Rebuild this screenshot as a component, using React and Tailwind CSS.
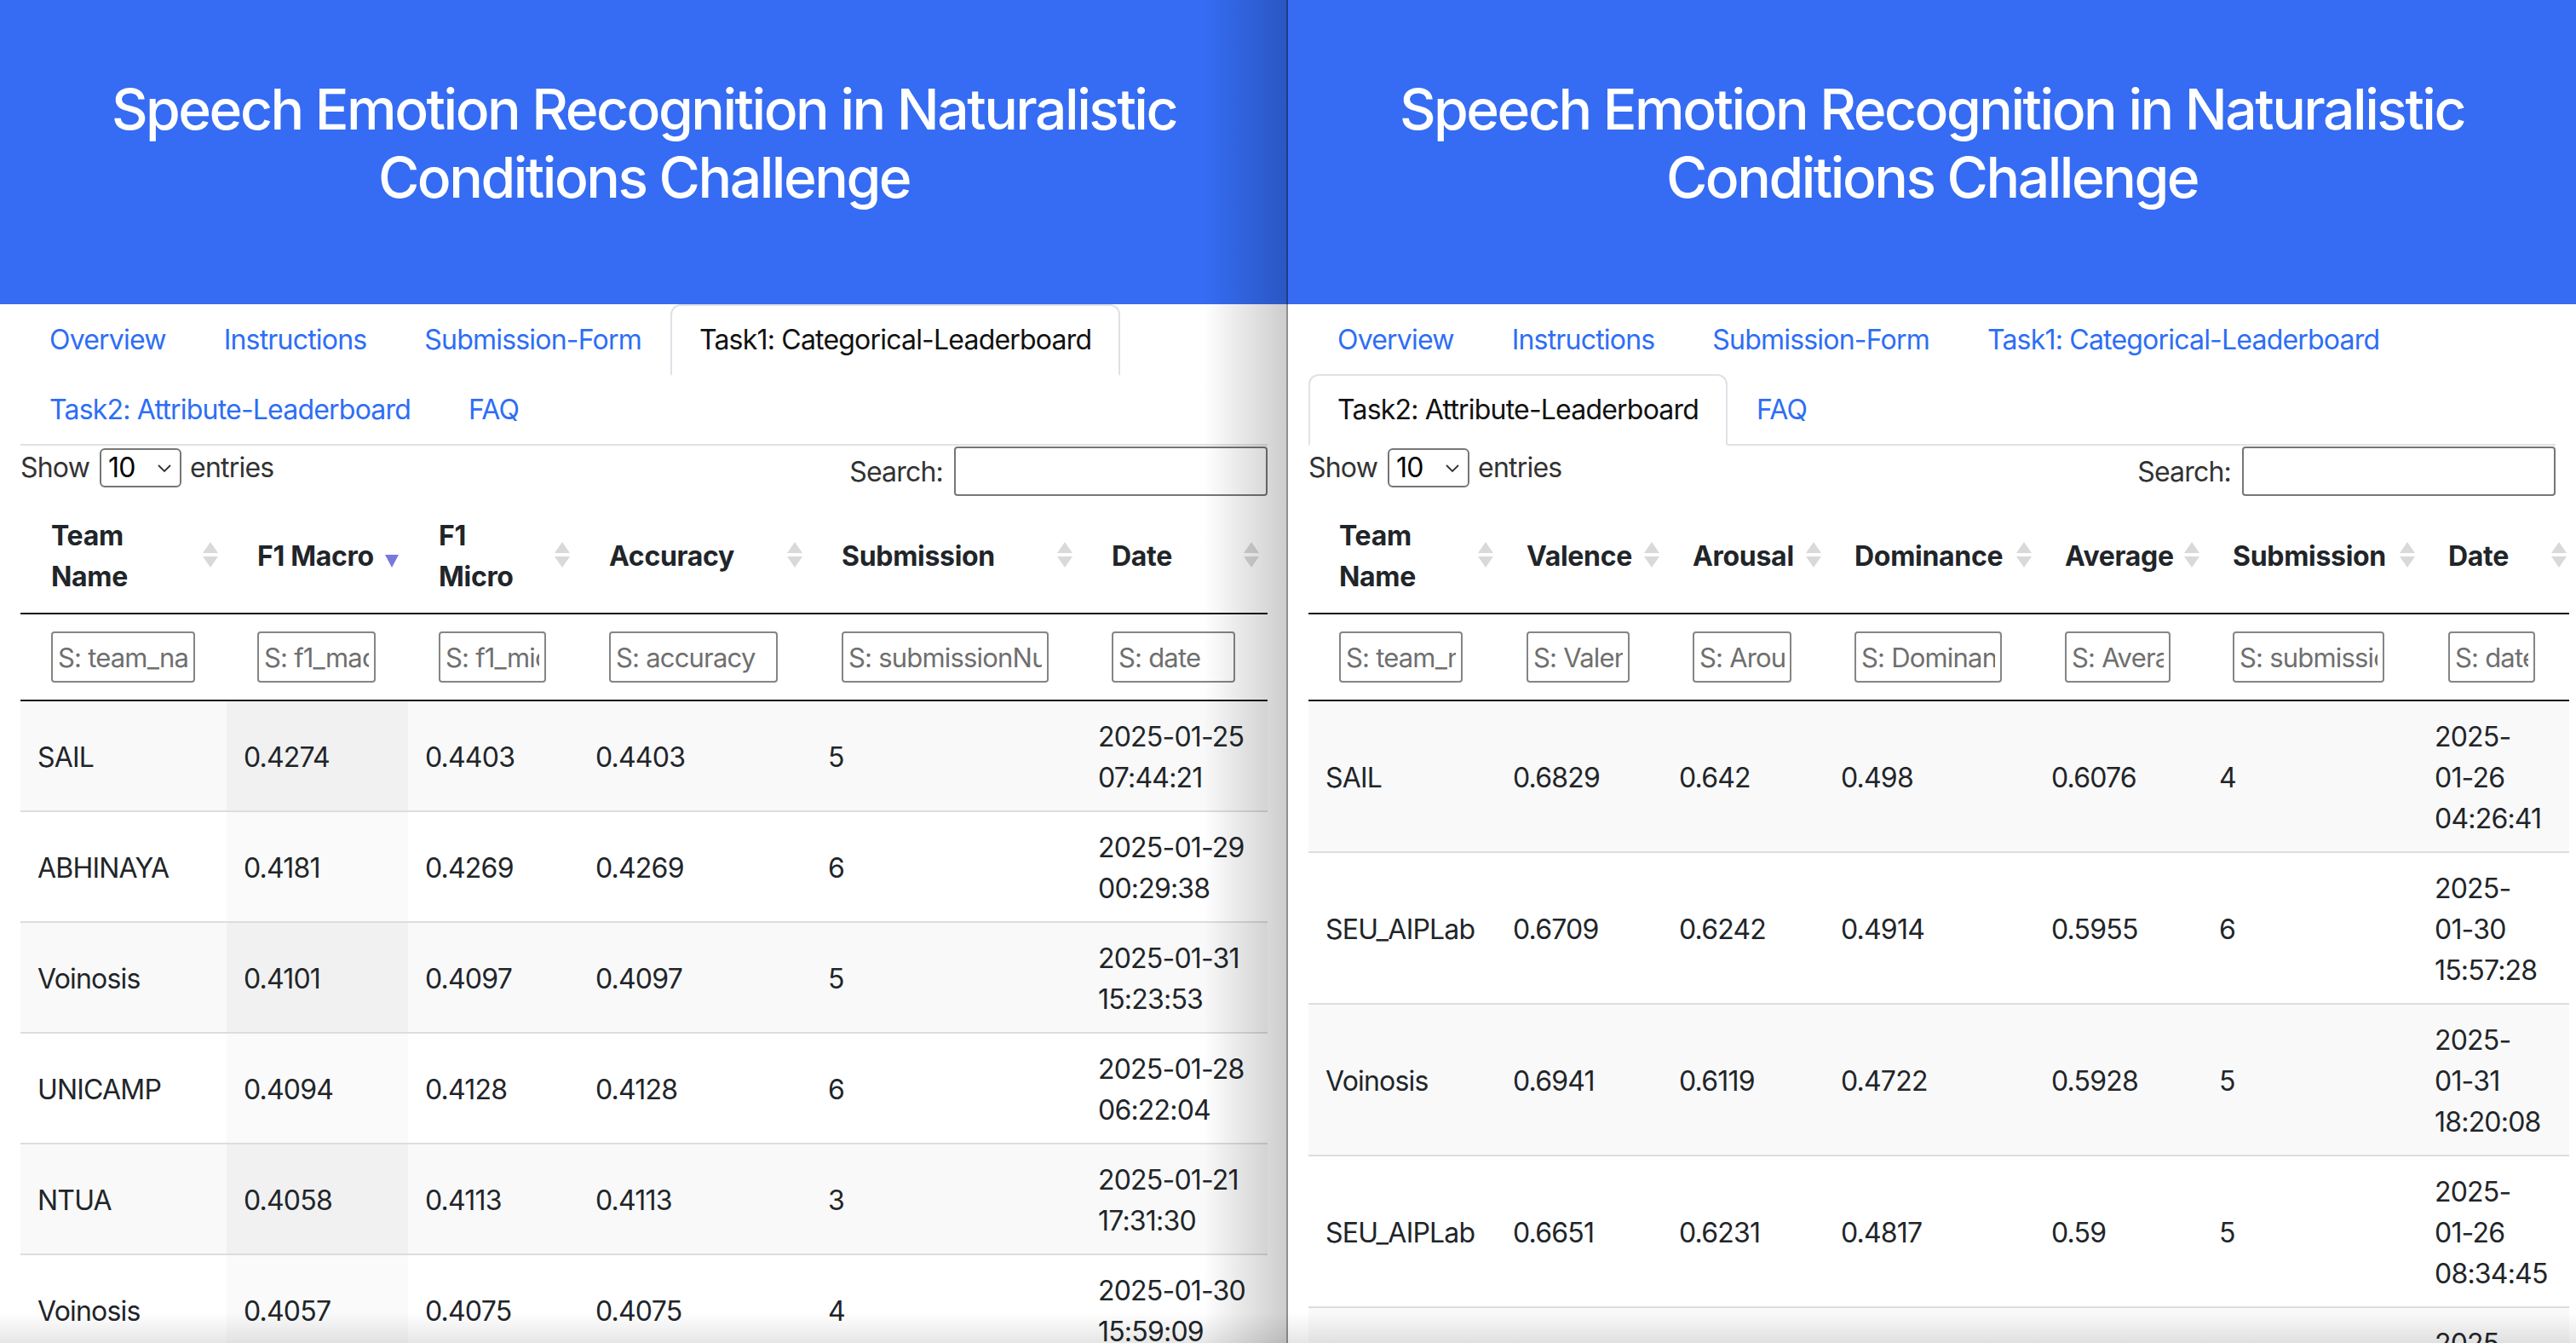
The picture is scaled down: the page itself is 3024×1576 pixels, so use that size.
import React from 'react';

const TABS = [
  'Overview',
  'Instructions',
  'Submission-Form',
  'Task1: Categorical-Leaderboard',
  'Task2: Attribute-Leaderboard',
  'FAQ',
];

const leftCols = [
  { label: ['Team', 'Name'], w: 'w-[242px]', ph: 'S: team_name', iw: 'w-[169px]' },
  { label: ['F1 Macro'], w: 'w-[213px]', ph: 'S: f1_macro', iw: 'w-[139px]' },
  { label: ['F1', 'Micro'], w: 'w-[200px]', ph: 'S: f1_micro', iw: 'w-[126px]' },
  { label: ['Accuracy'], w: 'w-[273px]', ph: 'S: accuracy', iw: 'w-[198px]' },
  { label: ['Submission'], w: 'w-[317px]', ph: 'S: submissionNum', iw: 'w-[243px]' },
  { label: ['Date'], w: 'w-[219px]', ph: 'S: date', iw: 'w-[145px]' },
];

const leftRows = [
  ['SAIL', '0.4274', '0.4403', '0.4403', '5', ['2025-01-25', '07:44:21']],
  ['ABHINAYA', '0.4181', '0.4269', '0.4269', '6', ['2025-01-29', '00:29:38']],
  ['Voinosis', '0.4101', '0.4097', '0.4097', '5', ['2025-01-31', '15:23:53']],
  ['UNICAMP', '0.4094', '0.4128', '0.4128', '6', ['2025-01-28', '06:22:04']],
  ['NTUA', '0.4058', '0.4113', '0.4113', '3', ['2025-01-21', '17:31:30']],
  ['Voinosis', '0.4057', '0.4075', '0.4075', '4', ['2025-01-30', '15:59:09']],
];

const rightCols = [
  { label: ['Team', 'Name'], w: 'w-[220px]', ph: 'S: team_name', iw: 'w-[145px]' },
  { label: ['Valence'], w: 'w-[195px]', ph: 'S: Valence', iw: 'w-[121px]' },
  { label: ['Arousal'], w: 'w-[190px]', ph: 'S: Arousal', iw: 'w-[116px]' },
  { label: ['Dominance'], w: 'w-[247px]', ph: 'S: Dominance', iw: 'w-[173px]' },
  { label: ['Average'], w: 'w-[197px]', ph: 'S: Average', iw: 'w-[124px]' },
  { label: ['Submission'], w: 'w-[253px]', ph: 'S: submissionNum', iw: 'w-[178px]' },
  { label: ['Date'], w: 'w-[178px]', ph: 'S: date', iw: 'w-[102px]' },
];

const rightRows = [
  ['SAIL', '0.6829', '0.642', '0.498', '0.6076', '4', ['2025-', '01-26', '04:26:41']],
  ['SEU_AIPLab', '0.6709', '0.6242', '0.4914', '0.5955', '6', ['2025-', '01-30', '15:57:28']],
  ['Voinosis', '0.6941', '0.6119', '0.4722', '0.5928', '5', ['2025-', '01-31', '18:20:08']],
  ['SEU_AIPLab', '0.6651', '0.6231', '0.4817', '0.59', '5', ['2025-', '01-26', '08:34:45']],
  ['NTUA', '0.6712', '0.6055', '0.4678', '0.5815', '3', ['2025-', '01-21', '17:45:02']],
];

const SortIcon = ({ active }) =>
  active ? (
    <svg width="16" height="30" viewBox="0 0 16 30" className="block">
      <polygon points="0,15 16,15 8,30" fill="#7779dc" />
    </svg>
  ) : (
    <svg width="18" height="30" viewBox="0 0 18 30" className="block">
      <polygon points="9,0 18,13 0,13" fill="#d9d9d9" />
      <polygon points="0,17 18,17 9,30" fill="#d9d9d9" />
    </svg>
  );

const Tabs = ({ active }) => (
  <ul className="flex flex-wrap border-b-2 border-[#dee2e6]">
    {TABS.map((t, i) => (
      <li
        key={t}
        className={`-mb-[2px] rounded-t-[12px] border-2 px-[32px] py-[16px] text-[32px] leading-[48px] ${
          i === active
            ? 'border-[#dee2e6] border-b-white bg-white text-[#111]'
            : 'border-transparent text-[#2e6ef5]'
        }`}
      >
        {t}
      </li>
    ))}
  </ul>
);

const Panel = ({ activeTab, cols, rows, sortedIdx, iconRight, tableW, shadow }) => (
  <div className="relative h-[1576px] w-[1512px] shrink-0 overflow-hidden bg-white text-[#212529]">
    <div className="h-[357px] bg-[#356cf3] pt-[88px] text-center text-[66px] font-medium leading-[80px] tracking-[-2.5px] text-white">
      Speech Emotion Recognition in Naturalistic
      <br />
      Conditions Challenge
    </div>

    <div className="px-[24px]">
      <Tabs active={activeTab} />

      {/* length + search controls */}
      <div className="flex h-[60px] items-start justify-between text-[32px] text-[#333]">
        <div className="mt-[3px] flex h-[46px] items-center">
          <span>Show</span>
          <div className="relative ml-[12px] flex h-[46px] w-[96px] items-center rounded-[6px] border-2 border-[#767676] pl-[8px] text-black">
            10
            <svg width="16" height="10" viewBox="0 0 16 10" className="absolute right-[10px] top-[17px]">
              <path d="M1 1 L8 8 L15 1" stroke="#333" strokeWidth="1.8" fill="none" />
            </svg>
          </div>
          <span className="ml-[10px]">entries</span>
        </div>
        <div className="mt-[1px] flex h-[58px] items-center">
          <span className="mt-[2px]">Search:</span>
          <div className="ml-[13px] h-[58px] w-[368px] rounded-[4px] border-2 border-[#767676]" />
        </div>
      </div>

      <table className={`table-fixed border-separate border-spacing-0 text-left text-[32px] leading-[48px] ${tableW}`}>
        <colgroup>
          {cols.map((c, i) => (
            <col key={i} className={c.w} />
          ))}
        </colgroup>
        <thead>
          <tr>
            {cols.map((c, i) => (
              <th
                key={i}
                className="relative whitespace-nowrap border-b-2 border-[#111] pb-[18px] pl-[36px] pr-[20px] pt-[22px] align-middle font-bold tracking-[-0.3px]"
              >
                {c.label.map((l, j) => (
                  <div key={j}>{l}</div>
                ))}
                <span className={`absolute top-1/2 -translate-y-1/2 ${sortedIdx === i ? 'right-[11px]' : iconRight}`}>
                  <SortIcon active={sortedIdx === i} />
                </span>
              </th>
            ))}
          </tr>
          <tr>
            {cols.map((c, i) => (
              <th key={i} className="border-b-2 border-[#111] py-[20px] pl-[36px] align-middle font-normal">
                <input
                  readOnly
                  placeholder={c.ph}
                  className={`block h-[60px] rounded-[4px] border-2 border-[#858585] bg-white px-[6px] text-[31px] placeholder:text-[#6f6f6f] ${c.iw}`}
                />
              </th>
            ))}
          </tr>
        </thead>
        <tbody>
          {rows.map((r, ri) => (
            <tr key={ri}>
              {r.map((cell, ci) => {
                const odd = ri % 2 === 0;
                let bg = odd ? 'bg-[#f9f9f9]' : 'bg-white';
                if (ci === sortedIdx) bg = odd ? 'bg-[#f1f1f1]' : 'bg-[#fafafa]';
                return (
                  <td
                    key={ci}
                    className={`whitespace-nowrap px-[20px] pb-[14px] pt-[18px] align-middle ${bg} ${ri > 0 ? 'border-t-2 border-[#dddddd]' : ''}`}
                  >
                    {Array.isArray(cell) ? cell.map((l, k) => <div key={k}>{l}</div>) : cell}
                  </td>
                );
              })}
            </tr>
          ))}
        </tbody>
      </table>
    </div>

    {shadow && (
      <>
        <div className="pointer-events-none absolute inset-y-0 right-0 w-[100px] bg-linear-to-r from-transparent to-black/20" />
        <div className="pointer-events-none absolute inset-y-0 right-0 w-[2px] bg-black/30" />
      </>
    )}
    <div className="pointer-events-none absolute inset-x-0 bottom-0 h-[36px] bg-linear-to-b from-transparent to-black/10" />
  </div>
);

export default function App() {
  return (
    <div className="flex h-[1576px] w-[3024px] overflow-hidden bg-white font-['Inter',sans-serif] tracking-[-0.8px]">
      <Panel
        activeTab={3}
        cols={leftCols}
        rows={leftRows}
        sortedIdx={1}
        iconRight="right-[10px]"
        tableW="w-[1464px]"
        shadow
      />
      <Panel
        activeTab={4}
        cols={rightCols}
        rows={rightRows}
        sortedIdx={-1}
        iconRight="right-[3px]"
        tableW="w-[1480px]"
      />
    </div>
  );
}
